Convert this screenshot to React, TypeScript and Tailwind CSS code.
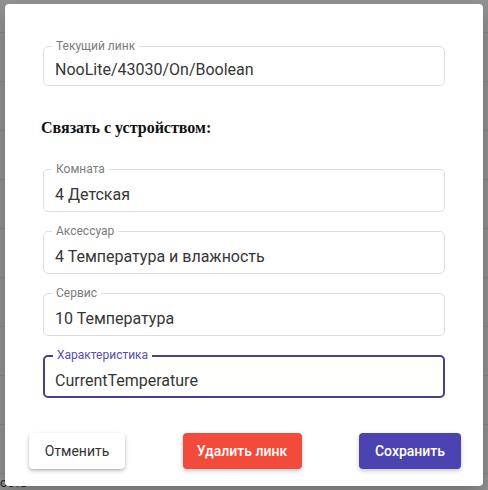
import React from "react";

function Field({ label, value, h, pt, focused }: { label: string; value: string; h: string; pt: string; focused?: boolean }) {
  return (
    <div
      className={
        "relative rounded-[5px] " +
        h +
        " " +
        (focused ? "border-2 border-[#4a3f8f] bg-[#fffffd]" : "border border-[#dedede]")
      }
    >
      <span
        className={
          "absolute left-[8px] top-[-8px] bg-white px-[4px] text-[12px] leading-[14px] " +
          (focused ? "text-[#5a4db3] left-[7px] top-[-9px]" : "text-[#7b7b7b]")
        }
      >
        {label}
      </span>
      <div className={(focused ? "pl-[10px] " : "pl-[11px] ") + pt + " text-[16px] leading-[20px] text-[#363636]"}>{value}</div>
    </div>
  );
}

export default function App() {
  const rows = [0, 1, 2, 3, 4, 5, 6, 7, 8, 9];
  return (
    <div className="relative h-[490px] w-[488px] overflow-hidden bg-[#939393]" style={{ fontFamily: "Roboto, 'Liberation Sans', sans-serif" }}>
      <div className="flex flex-col">
        <div className="h-[33px] border-b border-[#888888]" />
        {rows.map((r) => (
          <div key={r} className="h-[49px] border-b border-[#888888]" />
        ))}
      </div>
      <div className="absolute left-0 top-[476px] text-[13px] leading-[14px] text-[#2a2a2a]">ость</div>
      <div className="absolute left-[5px] top-[4px] flex h-[482px] w-[478px] flex-col rounded-[4px] bg-white shadow-[0_8px_20px_rgba(0,0,0,0.25)]">
        <div className="flex flex-col px-[38px] pt-[42px]">
          <Field label="Текущий линк" value="NooLite/43030/On/Boolean" h="h-[40px]" pt="pt-[13px]" />
          <div
            className="ml-[-2px] mt-[32px] text-[16px] font-bold leading-[20px] text-[#111]"
            style={{ fontFamily: "'Liberation Serif', 'Times New Roman', serif" }}
          >
            Связать с устройством:
          </div>
          <div className="mt-[31px] flex flex-col gap-[19px]">
            <Field label="Комната" value="4 Детская" h="h-[43px]" pt="pt-[15px]" />
            <Field label="Аксессуар" value="4 Температура и влажность" h="h-[43px]" pt="pt-[15px]" />
            <Field label="Сервис" value="10 Температура" h="h-[43px]" pt="pt-[15px]" />
            <Field label="Характеристика" value="CurrentTemperature" h="h-[43px]" pt="pt-[14px]" focused />
          </div>
        </div>
        <div className="mt-[35px] flex items-center justify-between pl-[24px] pr-[22px]">
          <button className="h-[36px] w-[96px] rounded-[4px] bg-white text-[14px] text-[#333] shadow-[0_2px_4px_rgba(0,0,0,0.22),0_1px_2px_rgba(0,0,0,0.12)]">
            Отменить
          </button>
          <button className="h-[36px] w-[119px] rounded-[4px] bg-[#f24b3b] text-[14px] font-medium text-white shadow-[0_2px_4px_rgba(0,0,0,0.22)]">
            Удалить линк
          </button>
          <button className="h-[36px] w-[102px] rounded-[4px] bg-[#4b43b2] text-[14px] font-medium text-white shadow-[0_2px_4px_rgba(0,0,0,0.22)]">
            Сохранить
          </button>
        </div>
      </div>
    </div>
  );
}
